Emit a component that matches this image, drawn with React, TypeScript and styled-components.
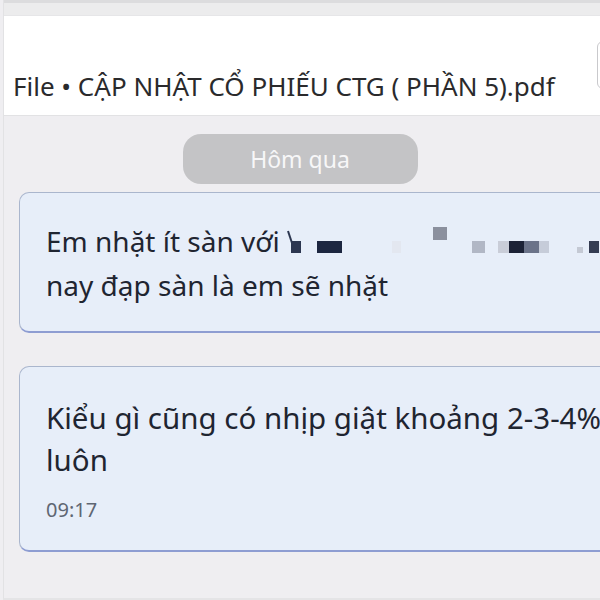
import styled, { createGlobalStyle } from 'styled-components';

const GlobalStyle = createGlobalStyle`
  html, body {
    margin: 0;
    padding: 0;
    width: 600px;
    height: 600px;
    overflow: hidden;
    background: #efeef1;
  }
  body {
    font-family: 'Noto Sans', 'Liberation Sans', sans-serif;
  }
`;

const Screen = styled.div`
  width: 600px;
  height: 600px;
  overflow: hidden;
  box-sizing: border-box;
  border-left: 1px solid #e2e2e4;
  border-bottom: 2px solid #e4e4e6;
  margin-left: 3px;
  background: #efeef1;
  display: flex;
  flex-direction: column;
`;

const TopStrip = styled.div`
  height: 12px;
  flex-shrink: 0;
  background: #ececed;
  border-top: 3px solid #dcdcde;
  border-bottom: 1px solid #e6e6e8;
`;

const Header = styled.header`
  height: 99px;
  flex-shrink: 0;
  background: #ffffff;
  border-bottom: 1px solid #e2e2e4;
  display: flex;
  justify-content: space-between;
  align-items: flex-start;
  padding-left: 9px;
`;

const FileName = styled.div`
  margin-top: 55px;
  font-size: 26px;
  line-height: 30px;
  color: #2a2a2c;
  white-space: nowrap;
`;

const CornerButton = styled.div`
  margin-top: 25px;
  margin-right: -8px;
  width: 12px;
  height: 46px;
  flex-shrink: 0;
  border: 1px solid #c9c9cc;
  border-radius: 6px;
  background: #fff;
`;

const Feed = styled.div`
  display: flex;
  flex-direction: column;
  padding-top: 18px;
`;

const DayRow = styled.div`
  display: flex;
  justify-content: center;
  margin-left: -7px;
`;

const DayPill = styled.div`
  width: 235px;
  height: 50px;
  border-radius: 18px;
  background: #c4c4c6;
  color: #f7f7f8;
  font-size: 23px;
  display: flex;
  align-items: center;
  justify-content: center;
`;

const Bubble = styled.div<{ $top: number; $pad: number; $fs: number }>`
  margin-top: ${(p) => p.$top}px;
  margin-left: 15px;
  width: 640px;
  flex-shrink: 0;
  box-sizing: border-box;
  padding: ${(p) => p.$pad}px 0 0 26px;
  background: #e7eef9;
  border: 1.5px solid #aab6cd;
  border-bottom: 2px solid #8e9dd2;
  border-radius: 10px;
  color: #1f2531;
  font-size: ${(p) => p.$fs}px;
`;

const Line = styled.div<{ $lh: number }>`
  line-height: ${(p) => p.$lh}px;
  white-space: nowrap;
`;

const Time = styled.div`
  font-size: 20px;
  color: #5f6673;
  margin-top: 15px;
`;

const Censor = styled.svg`
  vertical-align: -10px;
`;

const blocks = [
  { x: 4, y: 19, w: 10, h: 12, c: '#2c3650' },
  { x: 30, y: 19, w: 25, h: 12, c: '#1c2640' },
  { x: 105, y: 19, w: 9, h: 12, c: '#e3e7f0' },
  { x: 146, y: 5, w: 14, h: 13, c: '#8b909e' },
  { x: 185, y: 19, w: 13, h: 12, c: '#b1b7c5' },
  { x: 211, y: 19, w: 11, h: 12, c: '#c9cdd8' },
  { x: 222, y: 19, w: 15, h: 12, c: '#1c2236' },
  { x: 237, y: 19, w: 15, h: 12, c: '#6b7389' },
  { x: 252, y: 19, w: 10, h: 12, c: '#c6ccd9' },
  { x: 290, y: 25, w: 6, h: 6, c: '#c4c9d4' },
  { x: 302, y: 19, w: 10, h: 12, c: '#343c52' },
];

const Redacted = () => (
  <Censor width="320" height="40" viewBox="0 0 320 40">
    <path d="M1 9 L5 21" stroke="#2c3650" strokeWidth="2" />
    {blocks.map((b, i) => (
      <rect key={i} x={b.x} y={b.y} width={b.w} height={b.h} fill={b.c} />
    ))}
  </Censor>
);

export default function App() {
  return (
    <>
      <GlobalStyle />
      <Screen>
        <TopStrip />
        <Header>
          <FileName>File • CẬP NHẬT CỔ PHIẾU CTG ( PHẦN 5).pdf</FileName>
          <CornerButton />
        </Header>
        <Feed>
          <DayRow>
            <DayPill>Hôm qua</DayPill>
          </DayRow>
          <Bubble $top={8} $pad={26} $fs={28} style={{ height: 141 }}>
            <Line $lh={44}>
              Em nhặt ít sàn với <Redacted />
            </Line>
            <Line $lh={44}>nay đạp sàn là em sẽ nhặt</Line>
          </Bubble>
          <Bubble $top={33} $pad={30} $fs={29.5} style={{ height: 186 }}>
            <Line $lh={42}>Kiểu gì cũng có nhịp giật khoảng 2-3-4%</Line>
            <Line $lh={42}>luôn</Line>
            <Time>09:17</Time>
          </Bubble>
        </Feed>
      </Screen>
    </>
  );
}
